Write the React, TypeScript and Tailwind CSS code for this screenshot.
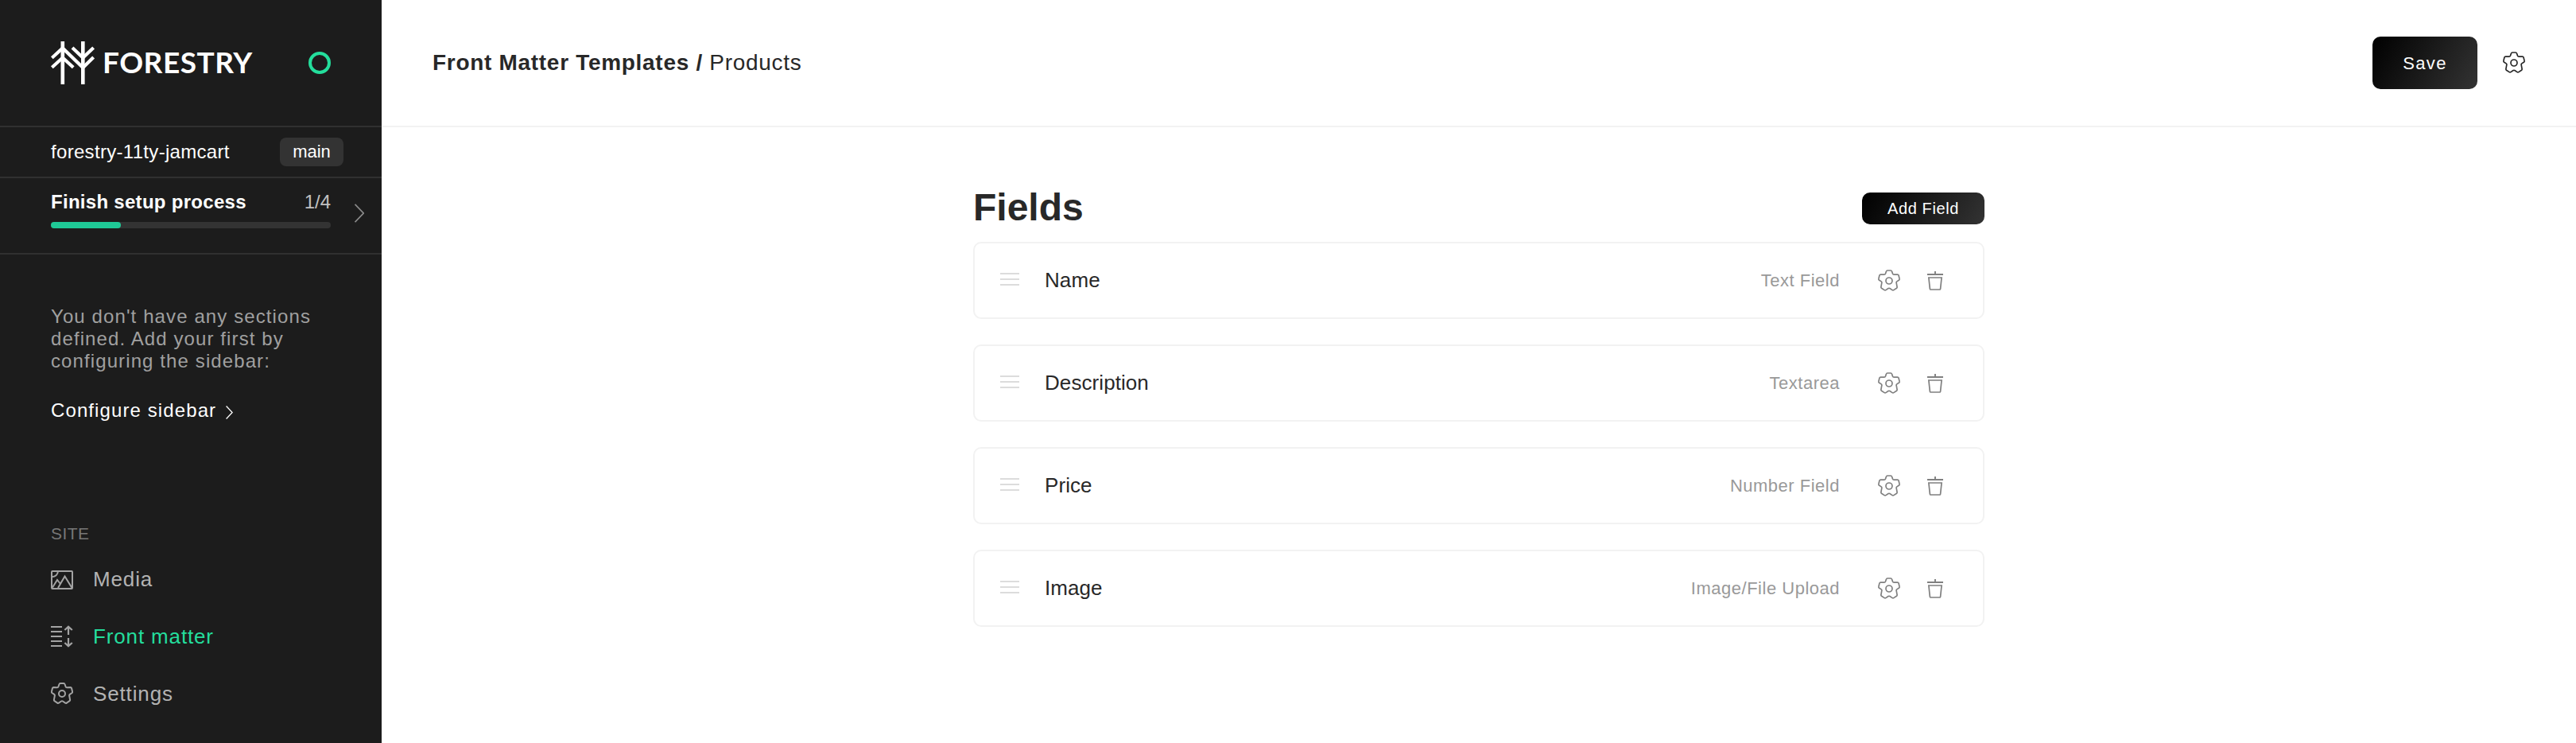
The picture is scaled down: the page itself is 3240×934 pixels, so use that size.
type IconProps = { className?: string };

const GearIcon = ({ className }: IconProps) => (
  <svg viewBox="0 0 28 28" fill="none" stroke="currentColor" strokeWidth="1.7" strokeLinejoin="round" className={className}>
    <path d="M11.9 1H16.1Q17.2 1 17.5 2L18.5 5Q18.9 6.2 20.1 6.2L24.6 6Q25.7 6 26 7L27.1 11.4Q27.4 12.4 26.6 13L23.8 14.9Q22.9 15.6 23.2 16.7L24.1 21.6Q24.3 22.6 23.5 23.2L19.8 25.6Q19 26.2 18.1 25.6L14.9 23.5Q14 23 13.1 23.5L9.9 25.6Q9 26.2 8.2 25.6L4.5 23.2Q3.7 22.6 3.9 21.6L4.8 16.7Q5.1 15.6 4.2 14.9L1.4 13Q.6 12.4 .9 11.4L2 7Q2.3 6 3.4 6L7.9 6.2Q9.1 6.2 9.5 5L10.5 2Q10.8 1 11.9 1Z" />
    <circle cx="14" cy="14" r="4" />
  </svg>
);

const TrashIcon = ({ className }: IconProps) => (
  <svg viewBox="0 0 20 24" fill="none" stroke="currentColor" strokeWidth="1.9" className={className}>
    <path d="M10 0V4M0 4H20" />
    <path d="M1.9 8H18.1L16.6 22.2Q16.5 23 15.7 23H4.3Q3.5 23 3.4 22.2Z" strokeWidth="1.7" />
  </svg>
);

const MediaIcon = ({ className }: IconProps) => (
  <svg viewBox="0 0 28 24" fill="none" stroke="currentColor" strokeWidth="2" className={className}>
    <rect x="1" y="1" width="26" height="22" rx="1" />
    <path d="M9 1C8.6 5 6 8 1 8.2M2 21.5L8 12L12 17M9 22L17.5 7.5L26.5 22" />
  </svg>
);

const FrontMatterIcon = ({ className }: IconProps) => (
  <svg viewBox="0 0 28 28" fill="none" stroke="currentColor" strokeWidth="2" className={className}>
    <path d="M0 2H14M0 8H14M0 14H14M0 20H14M0 26H14" />
    <path d="M22 12V2M17.4 6L22 1.8L26.8 6M22 16V26M17.4 22L22 26.2L26.8 22" strokeWidth="2.2" />
  </svg>
);

const ChevronIcon = ({ className }: IconProps) => (
  <svg viewBox="0 0 12 24" fill="none" stroke="currentColor" className={className}>
    <path d="M.5 .8L11.2 12L.5 23.2" />
  </svg>
);

const LogoMark = ({ className }: IconProps) => (
  <svg viewBox="0 0 56 54" fill="none" stroke="currentColor" strokeWidth="4.2" className={className}>
    <path d="M14.8 0V54M40.3 0V54" strokeWidth="4.6" />
    <path d="M1.3 20.8L14.8 8.5L40.3 33L53.6 20M1.3 32.8L14.8 20.5L28.2 32.8M27 8L40.3 20.5L53.6 8" />
  </svg>
);

const navItems = [
  { label: "Media", icon: <MediaIcon className="h-6 w-7" />, active: false },
  { label: "Front matter", icon: <FrontMatterIcon className="size-7" />, active: true },
  { label: "Settings", icon: <GearIcon className="size-7 stroke-2" />, active: false },
];

const fields = [
  { name: "Name", type: "Text Field" },
  { name: "Description", type: "Textarea" },
  { name: "Price", type: "Number Field" },
  { name: "Image", type: "Image/File Upload" },
];

function Sidebar() {
  return (
    <aside className="flex w-[480px] shrink-0 flex-col bg-[#1c1c1c] text-2xl text-white">
      <div className="flex h-40 items-center justify-between border-b-2 border-[#303030] pr-16 pl-16">
        <div className="flex items-center">
          <LogoMark className="h-[54px] w-14" />
          <span className="-mt-0.5 ml-[9px] font-['Lato'] text-[37px] leading-[54px] font-bold tracking-[0.5px]">FORESTRY</span>
        </div>
        <span className="size-7 rounded-full border-4 border-[#24de9c]" />
      </div>
      <div className="flex h-16 items-center justify-between border-b-2 border-[#303030] pr-12 pl-16">
        <span className="tracking-[0.013em]">forestry-11ty-jamcart</span>
        <span className="flex h-9 w-20 items-center justify-center rounded-lg bg-[#333] text-[22px]">main</span>
      </div>
      <div className="flex h-24 items-start border-b-2 border-[#303030] pl-16">
        <div className="w-[352px] pt-4">
          <div className="flex justify-between leading-7">
            <span className="font-bold tracking-[0.012em]">Finish setup process</span>
            <span className="text-[#c0c0c0]">1/4</span>
          </div>
          <div className="mt-[11px] h-2 rounded-full bg-[#333]">
            <div className="h-2 w-1/4 rounded-full bg-[#1fc996]" />
          </div>
        </div>
        <ChevronIcon className="mt-8 ml-[30px] h-6 w-3 stroke-[1.8] text-[#8a8a8a]" />
      </div>
      <div className="px-16 pt-16 tracking-[0.046em]">
        <p className="leading-7 text-[#a0a0a0]">
          You don't have any sections
          <br />
          defined. Add your first by
          <br />
          configuring the sidebar:
        </p>
        <a className="mt-[34px] flex items-center leading-7">
          Configure sidebar
          <ChevronIcon className="mt-[5px] ml-3 h-[17px] w-[9px] stroke-[1.9]" />
        </a>
      </div>
      <h2 className="mt-[127px] pl-16 text-[21px] leading-7 tracking-[0.02em] text-[#777]">SITE</h2>
      <nav className="mt-2 flex flex-col pl-16 text-[26px] tracking-[0.033em] text-[#a3a3a3]">
        {navItems.map((item) => (
          <a key={item.label} className="flex h-[71.6px] items-center gap-[25px]">
            {item.icon}
            <span className={item.active ? "text-[#24de9c]" : "text-[#b3b3b3]"}>{item.label}</span>
          </a>
        ))}
      </nav>
    </aside>
  );
}

function FieldCard({ name, type }: { name: string; type: string }) {
  return (
    <li className="flex h-[97px] items-center rounded-[10px] border-2 border-[#f2f2f2] pr-[50px] pl-8">
      <span className="-mt-[3px] flex w-6 flex-col gap-[5px]">
        <i className="h-0.5 bg-[#dcdcdc]" />
        <i className="h-0.5 bg-[#dcdcdc]" />
        <i className="h-0.5 bg-[#dcdcdc]" />
      </span>
      <span className="ml-8 flex-1 text-[26px] tracking-[0.003em]">{name}</span>
      <span className="text-[22px] tracking-[0.023em] text-[#999]">{type}</span>
      <GearIcon className="ml-12 size-7 text-[#808080]" />
      <TrashIcon className="ml-[34px] h-6 w-5 text-[#808080]" />
    </li>
  );
}

export default function App() {
  return (
    <div className="flex h-[934px] w-[3240px] overflow-hidden bg-white font-['Liberation_Sans',Arial,sans-serif] text-[#282828]">
      <Sidebar />
      <main className="flex flex-1 flex-col">
        <header className="flex h-40 items-center border-b-2 border-[#f2f2f2] px-16">
          <h1 className="flex-1 text-[28px] tracking-[0.025em]">
            <b>Front Matter Templates / </b>
            Products
          </h1>
          <button className="h-[66px] w-[132px] rounded-[10px] bg-linear-[120deg] from-black to-[#333] text-[22px] tracking-[0.06em] text-white">
            Save
          </button>
          <GearIcon className="ml-8 size-7" />
        </header>
        <section className="mx-auto w-[1272px] pt-[82px]">
          <div className="flex h-10 items-center justify-between">
            <h2 className="-mt-0.5 text-5xl leading-10 font-bold">Fields</h2>
            <button className="h-10 w-[154px] rounded-[10px] bg-linear-[120deg] from-black to-[#333] text-xl tracking-[0.03em] text-white">
              Add Field
            </button>
          </div>
          <ul className="mt-[22px] flex flex-col gap-8">
            {fields.map((field) => (
              <FieldCard key={field.name} {...field} />
            ))}
          </ul>
        </section>
      </main>
    </div>
  );
}
